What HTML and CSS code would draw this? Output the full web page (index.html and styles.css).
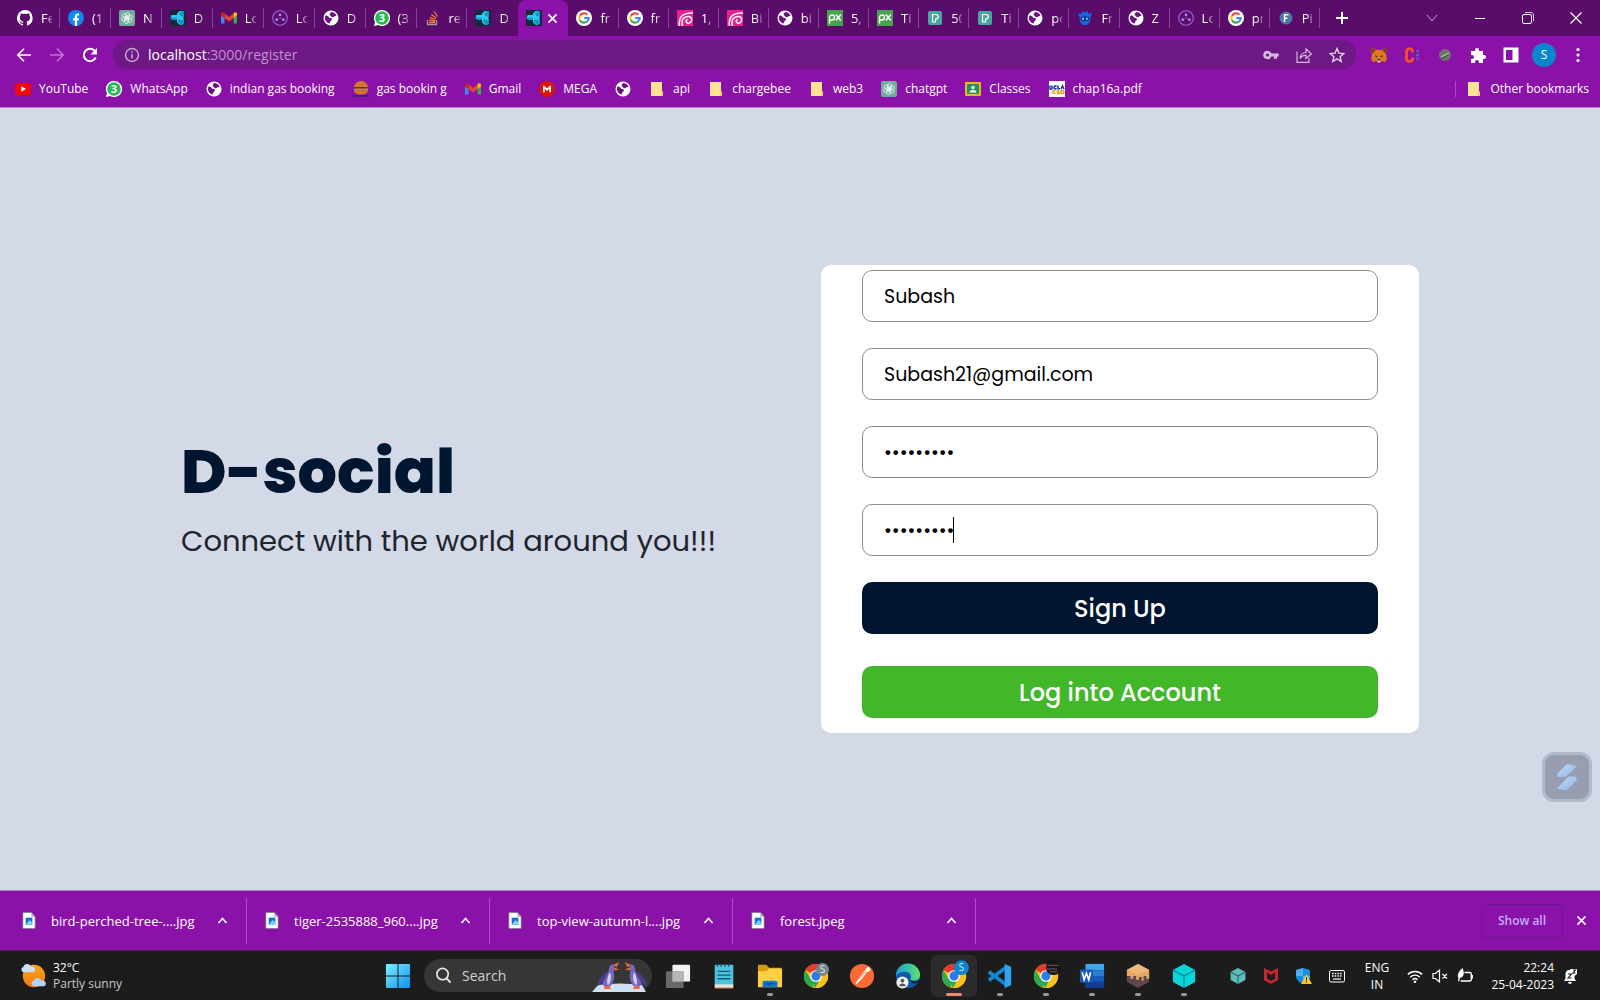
FILE: index.html
```html
<!DOCTYPE html>
<html lang="en">
<head>
<meta charset="utf-8">
<meta name="viewport" content="width=device-width, initial-scale=1">
<title>D-social</title>
<link rel="stylesheet" href="styles.css">
</head>
<body>
<svg class="sprite" aria-hidden="true">
  <defs>
    <linearGradient id="g-win" x1="0" y1="0" x2="1" y2="1"><stop offset="0" stop-color="#7df0ff"/><stop offset="1" stop-color="#0d8ff0"/></linearGradient>
    <linearGradient id="g-edge" x1="0" y1="0" x2="1" y2="0"><stop offset="0" stop-color="#1b9de2"/><stop offset="1" stop-color="#5fe06a"/></linearGradient>
    <linearGradient id="g-sun" x1="0" y1="0" x2="0" y2="1"><stop offset="0" stop-color="#f9a51c"/><stop offset="1" stop-color="#f07a13"/></linearGradient>
    <linearGradient id="g-s" x1="0" y1="0" x2="1" y2="1"><stop offset="0" stop-color="#c3dcf8"/><stop offset="1" stop-color="#8db4e6"/></linearGradient>
  </defs>
  <symbol id="github" viewBox="0 0 16 16"><path fill="#fff" d="M8 0a8 8 0 0 0-2.500 15.600c.4.1.5-.2.5-.4v-1.500c-2.200.5-2.700-1-2.700-1-.4-.9-.9-1.200-.9-1.200-.7-.5.1-.5.1-.5.8.1 1.200.8 1.200.8.7 1.300 1.900.9 2.300.7.1-.5.3-.9.5-1.100-1.800-.2-3.600-.9-3.600-4 0-.9.3-1.600.8-2.100-.1-.2-.4-1 .1-2.100 0 0 .7-.2 2.200.8a7.500 7.500 0 0 1 4 0c1.500-1 2.200-.8 2.200-.8.4 1.100.2 1.900.1 2.100.5.6.8 1.300.8 2.100 0 3.100-1.900 3.700-3.700 3.900.3.3.6.8.6 1.500v2.200c0 .2.100.5.6.4A8 8 0 0 0 8 0z"/></symbol>
  <symbol id="facebook" viewBox="0 0 16 16"><circle cx="8" cy="8" r="8" fill="#1086f0"/><path fill="#fff" d="M6.800 16v-5.500H5V8.200h1.800V6.600c0-2 1.100-3 2.900-3 .6 0 1.300.1 1.300.1v1.900h-.9c-.8 0-1 .5-1 1v1.600h1.900l-.4 2.300H9.100V16z"/></symbol>
  <symbol id="gpt" viewBox="0 0 16 16"><rect width="16" height="16" rx="2" fill="#74aa9c"/><g fill="none" stroke="#e8f5f0" stroke-width=".8"><rect x="6.500" y="2.500" width="4" height="6.500" rx="2"/><rect x="6.500" y="2.500" width="4" height="6.500" rx="2" transform="rotate(60 8 8)"/><rect x="6.500" y="2.500" width="4" height="6.500" rx="2" transform="rotate(120 8 8)"/><rect x="6.500" y="2.500" width="4" height="6.500" rx="2" transform="rotate(180 8 8)"/><rect x="6.500" y="2.500" width="4" height="6.500" rx="2" transform="rotate(240 8 8)"/><rect x="6.500" y="2.500" width="4" height="6.500" rx="2" transform="rotate(300 8 8)"/></g></symbol>
  <symbol id="dapp" viewBox="0 0 16 16"><rect width="16" height="16" fill="#122a3a"/><path fill="#2fc8ee" d="M7 3.500L9.500 1 14 1.500V7l-1 1 1 1.500V14l-4 1-3-2.500V10l-5-.5L.5 8l1-3L7 5z"/><path fill="#1795c9" d="M9 3l5-1.500V7l-4-1zM8 9.500l6 .5v4l-3 .5-3-2.500zM1 7.500l6 .5v2l-5-.5z"/></symbol>
  <symbol id="gmail" viewBox="0 0 16 16"><path fill="#4285f4" d="M0 4v9.500h3.500V7z"/><path fill="#34a853" d="M16 4v9.500h-3.500V7z"/><path fill="#ea4335" d="M3.500 3.500L8 7l4.500-3.500V8L8 11.400 3.500 8z"/><path fill="#c5221f" d="M0 4c0-1.800 2-2.400 3.500-1v5L0 5.500z"/><path fill="#fbbc04" d="M16 4c0-1.800-2-2.400-3.500-1v5L16 5.500z"/></symbol>
  <symbol id="dots" viewBox="0 0 16 16"><circle cx="8" cy="8" r="7.300" fill="none" stroke="#a566dd" stroke-width="1.100"/><g fill="#a98af0"><circle cx="8" cy="4.800" r="1.400"/><circle cx="4.700" cy="9.700" r="1.400"/><circle cx="11.300" cy="9.700" r="1.400"/></g><path stroke="#8f72dc" stroke-width=".6" d="M8 6.500V8l-1.800 1M8 8l1.800 1"/></symbol>
  <symbol id="globe" viewBox="0 0 16 16"><circle cx="8" cy="8" r="7.500" fill="#fff"/><path fill="#6d1084" d="M2.400 5.500c1.500-.3 2.600.4 3.400 1.700.7 1 2 .4 2.800 1.200.7.7.2 2-.7 2.400-.8.4-.7 1.600-1.300 2.700-2.800-.7-4.900-3.200-4.600-6.300zM8.200 2c2.400 0 4.300 1.400 5.300 3.400-.8.9-2 .4-2.700 1.300-.8.9-2.300.8-2.600-.2-.3-1.100-1.600-.8-1.600-2C6.600 3.500 7.500 3 8.200 2z"/></symbol>
  <symbol id="whatsapp" viewBox="0 0 16 16"><path fill="#fff" d="M8 0a8 8 0 1 1-3.800 15L0 16l1-4A8 8 0 0 1 8 0z"/><circle cx="8" cy="8" r="6.800" fill="#25b954"/><text x="8" y="11.800" text-anchor="middle" class="glyph-bold" fill="#fff">3</text></symbol>
  <symbol id="stack" viewBox="0 0 16 16"><path fill="none" stroke="#a99" stroke-width="1.300" d="M2.500 10v4.500h9V10"/><path stroke="#f48024" stroke-width="1.300" d="M4 12.500h6M4.200 10l5.900 1M4.800 7.300l5.600 2.200M6.300 4.500l4.900 3.600M9 1.500l3.500 5"/></symbol>
  <symbol id="google" viewBox="0 0 16 16"><circle cx="8" cy="8" r="8" fill="#fff"/><g fill="none" stroke-width="2.200"><path stroke="#ea4335" d="M3.900 5.700A4.700 4.700 0 0 1 11.400 4.700"/><path stroke="#fbbc05" d="M3.900 10.300a4.700 4.700 0 0 1 0-4.600"/><path stroke="#34a853" d="M3.900 10.300a4.700 4.700 0 0 0 7.200 1.200"/><path stroke="#4285f4" d="M11.100 11.500A4.700 4.700 0 0 0 12.700 8H8.200"/></g></symbol>
  <symbol id="swirl" viewBox="0 0 16 16"><rect width="16" height="16" fill="#ee1e8c"/><g fill="none" stroke="#fff" stroke-width="1.500"><path d="M2.500 16C1 8 5 2.500 16 3"/><path d="M5.500 16C3.500 10 7 6 12 6.500c3.500.5 3.500 5.500.5 6.500s-4.500-2.500-2-3.500"/></g></symbol>
  <symbol id="px" viewBox="0 0 16 16"><rect width="16" height="16" fill="#48a44c"/><g fill="none" stroke="#fff" stroke-width="1.500"><path d="M2.500 13.500V7a2.500 2.500 0 1 1 2.500 3H3M8.800 4.500l5 6M13.800 4.500l-5 6"/></g></symbol>
  <symbol id="pexels" viewBox="0 0 16 16"><rect x="1" y="1" width="14" height="14" rx="2" fill="#4aa69b"/><path fill="none" stroke="#fff" stroke-width="1.200" d="M5.500 4.500H9a2 2 0 0 1 0 4.500h-.5v3h-3z"/></symbol>
  <symbol id="freebie" viewBox="0 0 16 16"><path fill="#1769e0" d="M1 3l3 1 2-3 2 2 2-2 2 3 3-1-1.500 4-.5 5-3 3H6l-3-3-.5-5z"/><rect x="3.500" y="6.500" width="9" height="4.500" rx="2.200" fill="#0c2f80"/><circle cx="6" cy="8.700" r="1.200" fill="#6db3ff"/><circle cx="10" cy="8.700" r="1.200" fill="#6db3ff"/></symbol>
  <symbol id="fcircle" viewBox="0 0 16 16"><circle cx="8" cy="8" r="6.500" fill="#4a78a8"/><path fill="none" stroke="#fff" stroke-width="1.400" d="M6.500 12V4.800h4M6.500 8.200h3"/></symbol>
  <symbol id="youtube" viewBox="0 0 16 16"><rect y="2" width="16" height="12" rx="3" fill="#f60606"/><path fill="#fff" d="M6.300 5.300L11 8l-4.700 2.700z"/></symbol>
  <symbol id="burger" viewBox="0 0 16 16"><path fill="#d9752a" d="M1 6.500C1 3 4 0 8 0s7 3 7 6.500zM1 9.500h14c-.5 3-3 4-7 4s-6.500-1-7-4z"/><path fill="#5a3a2a" d="M1 6h14v1.500H1z"/><path fill="#c58a3a" d="M1 7.500h14v2H1z"/><path fill="#4b1d7a" d="M0 14h16v2H0z"/></symbol>
  <symbol id="mega" viewBox="0 0 16 16"><circle cx="8" cy="8" r="8" fill="#dd1405"/><path fill="#fff" d="M4 11.300V4.800h1.300L8 7.600l2.700-2.800H12v6.500h-1.700V7.800L8 10.100 5.700 7.800v3.500z"/></symbol>
  <symbol id="folder" viewBox="0 0 16 16"><path fill="#ffe394" d="M2 1h11v9l1 1v4H2z"/><path fill="#f7c455" d="M12 10.500h1.600V15H12z"/></symbol>
  <symbol id="classes" viewBox="0 0 16 16"><rect y="1" width="16" height="14" rx="1" fill="#f1b51c"/><rect x="2" y="3" width="12" height="10" fill="#23945a"/><circle cx="8" cy="6.500" r="1.700" fill="#fff"/><path fill="#fff" d="M4.500 11.500c0-3.300 7-3.300 7 0z"/></symbol>
  <symbol id="ucla" viewBox="0 0 16 16"><rect width="16" height="16" fill="#fff"/><path fill="none" stroke="#143a9c" stroke-width="1.500" d="M1 4.500v3c0 1 2 1 2 0v-3M7.500 5.500c-1.500-1.500-2.500 0-2.500 1s1 2 2.500.8M9 4.500v3.300h2M12 8.300l1.500-3.500L15 8.300"/><path fill="none" stroke="#e5a22c" stroke-width="1.500" d="M6.500 9.800c-1.500-1-2.800 0-2.800 1s1.300 2 2.800 1M10 9.500c-3 0-2 1.500-.5 1.500s1.500 2-1.500 1.300M12 9.500v3h1c2.500 0 2.500-3 0-3z"/></symbol>
  <symbol id="close" viewBox="0 0 16 16"><path stroke="currentColor" stroke-width="2" d="M3 3l10 10M13 3L3 13"/></symbol>
  <symbol id="caretup" viewBox="0 0 16 16"><path fill="none" stroke="#fff" stroke-width="2" d="M3 11l5-5.500 5 5.500"/></symbol>
  <symbol id="file" viewBox="0 0 14 18"><path fill="#fff" stroke="#777" stroke-width=".7" d="M.5.5h9l4 4.500v12.500H.5z"/><path fill="#aaa" d="M9.500.5v4.500h4z"/><rect x="3.500" y="6" width="7" height="7.500" fill="#1374c9"/><path fill="#7fd4ff" d="M3.500 13.500l4-5 3 2.500v2.500z"/></symbol>
  <symbol id="chrome" viewBox="0 0 28 28"><circle cx="14" cy="14" r="13" fill="#fbc116"/><path fill="#e33b2e" d="M14 14L2.700 7.500A13 13 0 0 1 25.300 7.500H14z"/><path fill="#2da94f" d="M14 14l-3.500 12.500A13 13 0 0 1 2.700 7.500L8 17z"/><path fill="#2da94f" d="M8.400 17.200l4.600 9.800 4-7-3-.5z"/><path fill="#fbc116" d="M19.600 10.500h7A13 13 0 0 1 13 27l6.500-9.500z"/><circle cx="14" cy="14" r="6.300" fill="#fff"/><circle cx="14" cy="14" r="5" fill="#2f79e8"/></symbol>
  <symbol id="cube" viewBox="0 0 28 28"><path fill="#08d5d8" d="M14 1l12 6.500v13L14 27 2 20.500v-13z"/><path fill="none" stroke="#067f8c" stroke-width="1.200" d="M2 7.500L14 14l12-6.500M14 14v13"/></symbol>
  <symbol id="cube-dim" viewBox="0 0 28 28"><path fill="#5fbdb9" d="M14 0l13 7v14l-13 7-13-7V7z"/><path fill="none" stroke="#27696c" stroke-width="2" d="M1 7l13 7 13-7M14 14v14"/></symbol>
  <symbol id="penguin" viewBox="0 0 26 30"><path fill="#7967bd" d="M19 3c-3-1-6 1-6 4 0 3-5 8-7 17 2 3 7 4 10 0 3-5 3-9 2-14z"/><path fill="#d7d0f0" d="M14 11c2 4 1 11-2 14-2-3-1-9 2-14z"/><path fill="#4d3d91" d="M13 9C7 12 2 18 0 26c5-2 10-8 13-17z"/><path fill="#f06a32" d="M18 3l6-3-3 6zM18 6l6 2-5 1zM8 26h6l1 3H8z"/></symbol>
</svg>

<header class="browser">
  <div class="tabstrip">
    <div class="tabs">
      <a class="tab" href="#"><svg class="ico"><use href="#github"/></svg><span class="tab-text">Fe</span></a>
      <a class="tab" href="#"><svg class="ico"><use href="#facebook"/></svg><span class="tab-text">(1</span></a>
      <a class="tab" href="#"><svg class="ico"><use href="#gpt"/></svg><span class="tab-text">N</span></a>
      <a class="tab" href="#"><svg class="ico"><use href="#dapp"/></svg><span class="tab-text">D</span></a>
      <a class="tab" href="#"><svg class="ico"><use href="#gmail"/></svg><span class="tab-text">Lo</span></a>
      <a class="tab" href="#"><svg class="ico"><use href="#dots"/></svg><span class="tab-text">Lo</span></a>
      <a class="tab" href="#"><svg class="ico"><use href="#globe"/></svg><span class="tab-text">D</span></a>
      <a class="tab" href="#"><svg class="ico"><use href="#whatsapp"/></svg><span class="tab-text">(3</span></a>
      <a class="tab" href="#"><svg class="ico"><use href="#stack"/></svg><span class="tab-text">re</span></a>
      <a class="tab before-active" href="#"><svg class="ico"><use href="#dapp"/></svg><span class="tab-text">D</span></a>
      <div class="tab active"><svg class="ico"><use href="#dapp"/></svg><button class="icon-btn tab-close" aria-label="Close tab"><svg class="ico-s"><use href="#close"/></svg></button></div>
      <a class="tab" href="#"><svg class="ico"><use href="#google"/></svg><span class="tab-text">fr</span></a>
      <a class="tab" href="#"><svg class="ico"><use href="#google"/></svg><span class="tab-text">fr</span></a>
      <a class="tab" href="#"><svg class="ico"><use href="#swirl"/></svg><span class="tab-text">1,</span></a>
      <a class="tab" href="#"><svg class="ico"><use href="#swirl"/></svg><span class="tab-text">Bi</span></a>
      <a class="tab" href="#"><svg class="ico"><use href="#globe"/></svg><span class="tab-text">bi</span></a>
      <a class="tab" href="#"><svg class="ico"><use href="#px"/></svg><span class="tab-text">5,</span></a>
      <a class="tab" href="#"><svg class="ico"><use href="#px"/></svg><span class="tab-text">Ti</span></a>
      <a class="tab" href="#"><svg class="ico"><use href="#pexels"/></svg><span class="tab-text">50</span></a>
      <a class="tab" href="#"><svg class="ico"><use href="#pexels"/></svg><span class="tab-text">Ti</span></a>
      <a class="tab" href="#"><svg class="ico"><use href="#globe"/></svg><span class="tab-text">po</span></a>
      <a class="tab" href="#"><svg class="ico"><use href="#freebie"/></svg><span class="tab-text">Fr</span></a>
      <a class="tab" href="#"><svg class="ico"><use href="#globe"/></svg><span class="tab-text">Z</span></a>
      <a class="tab" href="#"><svg class="ico"><use href="#dots"/></svg><span class="tab-text">Lo</span></a>
      <a class="tab" href="#"><svg class="ico"><use href="#google"/></svg><span class="tab-text">pr</span></a>
      <a class="tab" href="#"><svg class="ico"><use href="#fcircle"/></svg><span class="tab-text">Pi</span></a>
    </div>
    <button class="icon-btn new-tab" aria-label="New tab"><svg class="ico" viewBox="0 0 16 16"><path stroke="#fff" stroke-width="2" d="M8 2v12M2 8h12"/></svg></button>
    <div class="window-controls">
      <button class="icon-btn" aria-label="Search tabs"><svg class="ico" viewBox="0 0 16 16"><path fill="none" stroke="#c9a9d1" d="M3 5l5 6 5-6"/></svg></button>
      <button class="icon-btn" aria-label="Minimize"><svg class="ico" viewBox="0 0 16 16"><path stroke="#fff" d="M3 8.500h10"/></svg></button>
      <button class="icon-btn" aria-label="Restore"><svg class="ico" viewBox="0 0 16 16"><rect x="2.500" y="4.500" width="9" height="9" rx="1.500" fill="none" stroke="#fff"/><path fill="none" stroke="#d9c3df" d="M5 2.500h6a2.500 2.500 0 0 1 2.500 2.500v6"/></svg></button>
      <button class="icon-btn" aria-label="Close"><svg class="ico" viewBox="0 0 16 16"><path stroke="#fff" stroke-width="1.200" d="M2.500 2.500l11 11M13.500 2.500l-11 11"/></svg></button>
    </div>
  </div>

  <div class="toolbar">
    <div class="nav">
      <button class="icon-btn" aria-label="Back"><svg class="ico" viewBox="0 0 16 16"><path fill="none" stroke="#fff" stroke-width="1.600" d="M15 8H2M8 1.800L1.800 8 8 14.200"/></svg></button>
      <button class="icon-btn" aria-label="Forward"><svg class="ico" viewBox="0 0 16 16"><path fill="none" stroke="#bd74cf" stroke-width="1.600" d="M1 8h13M8 1.800L14.200 8 8 14.200"/></svg></button>
      <button class="icon-btn" aria-label="Reload"><svg class="ico" viewBox="0 0 16 16"><path fill="none" stroke="#fff" stroke-width="2" d="M13.700 10.500A6.200 6.200 0 1 1 12.600 3.800L13.500 5"/><path fill="#fff" d="M15 1v6.500H8.500z"/></svg></button>
    </div>
    <div class="omnibox">
      <svg class="ico" viewBox="0 0 16 16"><circle cx="8" cy="8" r="6.500" fill="none" stroke="#c9a9d1" stroke-width="1.400"/><path stroke="#c9a9d1" stroke-width="1.600" d="M8 7v4.500M8 4.200v1.600"/></svg>
      <a class="url" href="#"><span class="url-host">localhost</span>:3000/register</a>
      <div class="omni-actions">
        <button class="icon-btn" aria-label="Passwords"><svg class="ico" viewBox="0 0 16 16"><path fill="#d5b9dc" fill-rule="evenodd" d="M4.500 3.800a4.200 4.200 0 1 0 3.900 5.600H11v2.400h3V9.400h1.700V6.600H8.400a4.200 4.200 0 0 0-3.900-2.800zm0 2.600a1.600 1.600 0 1 1 0 3.200 1.600 1.600 0 0 1 0-3.200z"/></svg></button>
        <button class="icon-btn" aria-label="Share"><svg class="ico" viewBox="0 0 16 16"><path fill="none" stroke="#d5b9dc" stroke-width="1.200" d="M1 4.500v10.800h12V11M4 11.500c.5-4 2.500-6 6-6V2l5.300 5-5.300 4.500V8.200c-2.600 0-4.400 1-6 3.300z"/></svg></button>
        <button class="icon-btn" aria-label="Bookmark"><svg class="ico" viewBox="0 0 16 16"><path fill="none" stroke="#e3cfe8" stroke-width="1.400" d="M8 1.600l1.900 4.500 4.900.4-3.700 3.200 1.100 4.800L8 11.900l-4.200 2.600 1.100-4.800L1.200 6.500l4.900-.4z"/></svg></button>
      </div>
    </div>
    <div class="extensions">
      <button class="icon-btn" aria-label="Wallet"><svg class="ico" viewBox="0 0 16 16"><path fill="#e2761b" d="M0 0l6 3h4l6-3-1 7 1 5-2 3-4-1-1 2H7l-1-2-4 1-2-3 1-5z"/><path fill="#763e1a" d="M0 0l5 3-4 4zM16 0l-5 3 4 4z"/><path fill="#d7c1b3" d="M6 12h4l-.5 3h-3z"/><path fill="#233447" d="M4 8l3 1.500-2 .8zM12 8L9 9.500l2 .8zM6.500 12h3v1.500h-3z"/></svg></button>
      <button class="icon-btn" aria-label="Contest"><svg class="ico" viewBox="0 0 16 16"><path fill="none" stroke="#f4502e" stroke-width="2.800" d="M8.500 5.500V4c0-3-6-3-6 0v8c0 3 6 3 6 0v-1.500"/><circle cx="13.500" cy="4" r="1.500" fill="#6c53b8"/><circle cx="13.500" cy="8" r="1.500" fill="#2d78d6"/><circle cx="13.500" cy="12" r="1.500" fill="#6c53b8"/></svg></button>
      <button class="icon-btn" aria-label="Disabled extension"><svg class="ico" viewBox="0 0 16 16"><circle cx="8" cy="8" r="6" fill="#6f7370"/><path stroke="#b3b7ad" stroke-width="1.300" d="M4 10l8-4"/><path stroke="#414441" d="M4.500 12L12 7.500"/></svg></button>
      <button class="icon-btn" aria-label="Extensions"><svg class="ico" viewBox="0 0 16 16"><path fill="#fff" d="M1 4h4V3a2 2 0 0 1 4 0v1h4v4h1a2 2 0 0 1 0 4h-1v4H9v-1a2 2 0 0 0-4 0v1H1v-4h1a2 2 0 0 0 0-4H1z"/></svg></button>
      <button class="icon-btn" aria-label="Side panel"><svg class="ico" viewBox="0 0 16 16"><path fill="#fff" fill-rule="evenodd" d="M.5.5h15v15H.5zM3 3v10h6.500V3z"/></svg></button>
      <button class="icon-btn avatar" aria-label="Profile">S</button>
      <button class="icon-btn" aria-label="Menu"><svg class="ico" viewBox="0 0 16 16"><g fill="#fff"><circle cx="8" cy="2.500" r="1.600"/><circle cx="8" cy="8" r="1.600"/><circle cx="8" cy="13.500" r="1.600"/></g></svg></button>
    </div>
  </div>

  <nav class="bookmarks">
    <a class="bookmark" href="#"><svg class="ico"><use href="#youtube"/></svg>YouTube</a>
    <a class="bookmark" href="#"><svg class="ico"><use href="#whatsapp"/></svg>WhatsApp</a>
    <a class="bookmark" href="#"><svg class="ico"><use href="#globe"/></svg>indian gas booking</a>
    <a class="bookmark" href="#"><svg class="ico"><use href="#burger"/></svg>gas bookin g</a>
    <a class="bookmark" href="#"><svg class="ico"><use href="#gmail"/></svg>Gmail</a>
    <a class="bookmark" href="#"><svg class="ico"><use href="#mega"/></svg>MEGA</a>
    <a class="bookmark" href="#" aria-label="Site"><svg class="ico"><use href="#globe"/></svg></a>
    <a class="bookmark" href="#"><svg class="ico"><use href="#folder"/></svg>api</a>
    <a class="bookmark" href="#"><svg class="ico"><use href="#folder"/></svg>chargebee</a>
    <a class="bookmark" href="#"><svg class="ico"><use href="#folder"/></svg>web3</a>
    <a class="bookmark" href="#"><svg class="ico"><use href="#gpt"/></svg>chatgpt</a>
    <a class="bookmark" href="#"><svg class="ico"><use href="#classes"/></svg>Classes</a>
    <a class="bookmark" href="#"><svg class="ico"><use href="#ucla"/></svg>chap16a.pdf</a>
    <a class="bookmark other" href="#"><svg class="ico"><use href="#folder"/></svg>Other bookmarks</a>
  </nav>
</header>

<main class="page">
  <div class="register">
    <section class="intro">
      <h1 class="brand">D-social</h1>
      <p class="tagline">Connect with the world around you!!!</p>
    </section>
    <form class="card">
      <input class="field" type="text" aria-label="Username" value="Subash">
      <input class="field" type="email" aria-label="Email" value="Subash21@gmail.com">
      <input class="field" type="password" aria-label="Password" value="secret123">
      <div class="field-focus">
        <input class="field" type="password" aria-label="Password again" value="secret123">
        <span class="caret"></span>
      </div>
      <button class="btn signup" type="button">Sign Up</button>
      <button class="btn login" type="button">Log into Account</button>
    </form>
  </div>
  <button class="widget" aria-label="Assistant"><svg class="widget-ico" viewBox="0 0 24 30"><path fill="url(#g-s)" d="M2 11L11 2q1.500-1 3-1L23 3 12 14q-1 1-2.500 1H4Q-.5 15 2 11z"/><path fill="url(#g-s)" d="M22 19L13 28q-1.500 1.500-3 1.500L1 27.500l11-11.500q1-1 2.500-1.500H20q4 1 2 4.500z"/></svg></button>
</main>

<section class="downloads">
  <div class="download"><svg class="file"><use href="#file"/></svg><span class="download-name">bird-perched-tree-....jpg</span><button class="icon-btn" aria-label="Options"><svg class="ico-s"><use href="#caretup"/></svg></button></div>
  <div class="download"><svg class="file"><use href="#file"/></svg><span class="download-name">tiger-2535888_960....jpg</span><button class="icon-btn" aria-label="Options"><svg class="ico-s"><use href="#caretup"/></svg></button></div>
  <div class="download"><svg class="file"><use href="#file"/></svg><span class="download-name">top-view-autumn-l....jpg</span><button class="icon-btn" aria-label="Options"><svg class="ico-s"><use href="#caretup"/></svg></button></div>
  <div class="download"><svg class="file"><use href="#file"/></svg><span class="download-name">forest.jpeg</span><button class="icon-btn" aria-label="Options"><svg class="ico-s"><use href="#caretup"/></svg></button></div>
  <button class="show-all">Show all</button>
  <button class="icon-btn bar-close" aria-label="Close downloads"><svg class="ico-s"><use href="#close"/></svg></button>
</section>

<footer class="taskbar">
  <div class="weather">
    <svg class="app-ico" viewBox="0 0 28 28"><circle cx="15" cy="14" r="12" fill="url(#g-sun)"/><path fill="#cfe0fa" d="M4 10a3 3 0 0 1-.5-5.800A4.500 4.500 0 0 1 12 4a3 3 0 0 1 2 6z"/><path fill="#b9d0f5" d="M15 25a3 3 0 0 1-.5-5.800 4.500 4.500 0 0 1 8.500 0 3 3 0 0 1 3 5.800z"/></svg>
    <div><div class="temp">32°C</div><div class="sky">Partly sunny</div></div>
  </div>
  <div class="apps">
    <button class="icon-btn start" aria-label="Start"><svg class="app-ico" viewBox="0 0 28 28"><g fill="url(#g-win)"><path d="M1 2.500Q1 1 2.500 1h11v12.500H1zM14.500 1h11Q27 1 27 2.500v11H14.500zM1 14.500h12.500V27h-11Q1 27 1 25.500zM14.500 14.500H27v11q0 1.500-1.500 1.500h-11z"/></g></svg></button>
    <label class="search">
      <svg class="search-ico" viewBox="0 0 18 18"><circle cx="8" cy="7.500" r="6" fill="none" stroke="#e6e6e6" stroke-width="1.800"/><path stroke="#e6e6e6" stroke-width="2" d="M12.300 12l4.200 4.500"/></svg>
      <input class="search-input" type="text" aria-label="Search" placeholder="Search">
      <svg class="penguins" viewBox="0 0 56 32"><path fill="#cfe0f0" d="M6 25q22-3 44 0l4 7H0z"/><use href="#penguin" x="4" y="2" width="26" height="28"/><g transform="matrix(-1 0 0 1 58 0)"><use href="#penguin" x="2" y="2" width="26" height="28"/></g></svg>
    </label>
    <button class="app" aria-label="Task view"><svg class="app-ico" viewBox="0 0 28 28"><rect x="8" y="2" width="19" height="18" rx="1" fill="#f3f3f3"/><rect x="1" y="9" width="19" height="18" rx="1" fill="#777" fill-opacity=".85"/><rect x="8" y="9" width="12" height="11" fill="#b7b7b7"/></svg></button>
    <button class="app" aria-label="Notepad"><svg class="app-ico" viewBox="0 0 28 28"><rect x="4" y="2" width="20" height="23" rx="1" fill="#4fc3e0"/><rect x="4" y="23" width="20" height="4" fill="#e9e4dd"/><path stroke="#9a5024" stroke-width="1.200" d="M4 27.200h20"/><path stroke="#17586c" stroke-width="1.500" d="M7 9h14M7 13h14M7 17h14M7 1v3M11 1v3M15 1v3M19 1v3"/></svg></button>
    <button class="app running" aria-label="Files"><svg class="app-ico" viewBox="0 0 28 28"><path fill="#d99a12" d="M1 3q0-1 1-1h8l3 3h13v6H1z"/><path fill="#fccf45" d="M1 9h9l3-3h14v20H1z"/><path fill="#1379cf" d="M6 26v-5q0-2 2-2h12q2 0 2 2v5z"/><path stroke="#0c4f90" stroke-width="2" d="M9 22.500h10"/></svg></button>
    <button class="app" aria-label="Chrome"><svg class="app-ico" viewBox="0 0 28 28"><use href="#chrome"/><circle cx="21" cy="7" r="7" fill="#76868f"/><text x="21" y="11" text-anchor="middle" class="badge-text">S</text></svg></button>
    <button class="app" aria-label="Postman"><svg class="app-ico" viewBox="0 0 28 28"><circle cx="14" cy="14" r="13" fill="#fb6a35"/><path fill="#fff" d="M20 4a3 3 0 0 1 2 5l-3 1-5 7-6 6-1-1 4-6 6-8z"/><path stroke="#fb6a35" d="M11 17l7-8"/></svg></button>
    <button class="app" aria-label="Edge"><svg class="app-ico" viewBox="0 0 28 28"><circle cx="14" cy="14" r="13" fill="#0f5aa8"/><path fill="url(#g-edge)" d="M1 14a13 13 0 0 1 26-1c0 6-7 7-10 5-1-1 1-2 0-5-2-5-12-5-16 1z"/><path fill="#1c1c1c" d="M17 18c3 3 7 2 10 0-2 4-6 5-9 3z"/><circle cx="8" cy="21" r="6.500" fill="#f2f2f2"/><circle cx="8" cy="19" r="2" fill="#555"/><path fill="#555" d="M4.500 25c0-4 7-4 7 0z"/></svg></button>
    <button class="app running current" aria-label="Chrome, profile S"><svg class="app-ico" viewBox="0 0 28 28"><use href="#chrome"/><circle cx="22" cy="5" r="8" fill="#0c84c9"/><text x="22" y="9" text-anchor="middle" class="badge-text">S</text></svg></button>
    <button class="app running" aria-label="Code"><svg class="app-ico" viewBox="0 0 28 28"><path fill="none" stroke="#1586d0" stroke-width="4" d="M2 9.500l18 13.500M2 18.500L20 5"/><path fill="#2ea3ee" d="M19 1l7 3v20l-7 3z"/></svg></button>
    <button class="app running" aria-label="Chrome, second profile"><svg class="app-ico" viewBox="0 0 28 28"><use href="#chrome"/><circle cx="22" cy="5" r="8" fill="#161616"/><path stroke="#7a6464" d="M16 2.500h12M15 6.500h11M18 9.500h8"/></svg></button>
    <button class="app running" aria-label="Word"><svg class="app-ico" viewBox="0 0 28 28"><rect x="7" y="1" width="20" height="7" fill="#41a5ee"/><rect x="7" y="8" width="20" height="6.500" fill="#2b7cd3"/><rect x="7" y="14" width="20" height="6.500" fill="#185abd"/><rect x="7" y="20" width="20" height="7" fill="#103f91"/><rect x="1" y="7" width="14" height="14" rx="1" fill="#185abd"/><path fill="none" stroke="#fff" stroke-width="1.700" d="M3.500 10l2 8L8 11l2.500 7 2-8"/></svg></button>
    <button class="app running" aria-label="Ganache"><svg class="app-ico" viewBox="0 0 28 28"><path fill="#5e464d" d="M14 1l12 6.500v13L14 27 2 20.500v-13z"/><path fill="#e4a663" d="M14 1l12 6.500V17h-3v-3h-3v5h-2v-4h-3v3h-3v-4H9v3H6v-3H2V7.500z"/><path fill="#f0b878" d="M14 1l12 6.500L14 13 2 7.500z"/></svg></button>
    <button class="app running" aria-label="Cube"><svg class="app-ico"><use href="#cube"/></svg></button>
  </div>
  <div class="tray">
    <button class="icon-btn tray-item" aria-label="Cube"><svg class="ico"><use href="#cube-dim"/></svg></button>
    <button class="icon-btn tray-item" aria-label="Antivirus"><svg class="ico" viewBox="0 0 16 16"><path fill="#c5262b" d="M1 0l7 3.500L15 0v12l-7 4-7-4zM4 4.500v6L8 13l4-2.500v-6L8 7z"/></svg></button>
    <button class="icon-btn tray-item" aria-label="Security"><svg class="ico" viewBox="0 0 16 16"><path fill="#1390e0" d="M7 0l7 2v6c0 4-3 6-7 8-4-2-7-4-7-8V2z"/><path fill="#74c7f7" d="M7 0v8H0V2zM7 8h7c0 4-3 6-7 8z" fill-opacity=".6"/><path fill="#fdc427" d="M10.500 6l5.500 10H5z"/><path stroke="#222" d="M10.500 9v3.500M10.500 13.500v1"/></svg></button>
    <button class="icon-btn tray-item" aria-label="Touch keyboard"><svg class="ico" viewBox="0 0 16 16"><rect x=".5" y="2.500" width="15" height="11.500" rx="1.500" fill="none" stroke="#fff"/><path stroke="#fff" stroke-width="1.300" stroke-dasharray="1.500 1.200" d="M3 5.500h10M3 8h10"/><path stroke="#fff" stroke-width="1.200" d="M4 11h8"/></svg></button>
    <div class="lang"><div>ENG</div><div>IN</div></div>
    <div class="status">
      <svg class="ico" viewBox="0 0 16 16"><g fill="none" stroke="#fff" stroke-width="1.300"><path d="M.8 6.500a10.200 10.200 0 0 1 14.400 0M3.200 9.200a6.800 6.800 0 0 1 9.600 0M5.500 11.700a3.600 3.600 0 0 1 5 0"/></g><circle cx="8" cy="13.700" r="1.300" fill="#fff"/></svg>
      <svg class="ico" viewBox="0 0 16 16"><path fill="none" stroke="#fff" stroke-width="1.200" d="M1 5.500h2.500L7.500 2v12l-4-3.500H1zM10.500 6l4.500 4.500M15 6l-4.500 4.500"/></svg>
      <svg class="ico" viewBox="0 0 16 16"><path fill="none" stroke="#fff" stroke-width="1.400" d="M7.500 4.500h5.300a1.500 1.500 0 0 1 1.500 1.500v5.500a1.500 1.500 0 0 1-1.500 1.500H3.500"/><path fill="#fff" d="M15 7h1v3.500h-1zM5.500 0c2 4 2 9-2.500 10l-1 3.500L1 13l.5-3C-.5 7 2 3 5.500 0z"/></svg>
    </div>
    <div class="clock"><div>22:24</div><div>25-04-2023</div></div>
    <button class="icon-btn" aria-label="Notifications"><svg class="ico" viewBox="0 0 16 16"><path fill="#fff" d="M6.500 2C3.500 2 2.500 4 2.500 6.500v4L1 13h12l-1.500-2.500V8L14 6V1H8zM5 14h4c-.3 2.500-3.700 2.500-4 0z"/><path fill="none" stroke="#1c1c1c" stroke-width="1.100" d="M5 6h3.500L5 10h3.500M10 2h2.500L10 5h2.500"/></svg></button>
  </div>
</footer>
</body>
</html>
```
FILE: styles.css
```css
* { box-sizing: border-box; }

body {
  margin: 0;
  min-height: 100vh;
  display: flex;
  flex-direction: column;
  font-family: "Segoe UI", "Open Sans", "Noto Sans", sans-serif;
  font-size: 12px;
  line-height: 16px;
  color: #fff;
  background: #d3d9e7;
}

a { color: inherit; text-decoration: none; }
button, input { font-family: inherit; }

.sprite { position: absolute; width: 0; height: 0; }
.glyph-bold { font: bold 11px "Open Sans", sans-serif; }
.badge-text { font: 11px "Open Sans", sans-serif; fill: #dfe9f0; }

.ico { width: 16px; height: 16px; flex: none; display: block; }
.ico-s { width: 13px; height: 13px; flex: none; display: block; }
.app-ico { width: 26px; height: 26px; flex: none; display: block; overflow: visible; }

.icon-btn {
  border: 0;
  padding: 0;
  background: none;
  color: #fff;
  display: flex;
  align-items: center;
  justify-content: center;
}

/* Browser header */
.browser { background: #8a12a8; border-bottom: 1px solid #b77fd0; }

.tabstrip {
  display: flex;
  align-items: center;
  height: 36px;
  background: #590c69;
}
.tabs { flex: 0 1 1320px; display: flex; height: 36px; padding-left: 9px; min-width: 0; }
.tab {
  flex: 50 1 0;
  min-width: 0;
  display: flex;
  align-items: center;
  gap: 8px;
  height: 36px;
  padding-left: 8px;
  font-size: 13px;
  background: linear-gradient(#83479a, #83479a) right center / 1px 20px no-repeat;
}
.tab:nth-child(-n+10) { flex-grow: 51; }
.tab-text {
  width: 11px;
  overflow: hidden;
  white-space: nowrap;
  -webkit-mask-image: linear-gradient(90deg, #000 40%, rgba(0, 0, 0, .3));
  mask-image: linear-gradient(90deg, #000 40%, rgba(0, 0, 0, .3));
}
.tab.before-active { background: none; }
.tab.active { background: #8a12a8; border-radius: 8px 8px 0 0; gap: 4px; }
.new-tab { width: 44px; height: 36px; }
.window-controls { margin-left: auto; display: flex; }
.window-controls .icon-btn { width: 48px; height: 32px; }

.toolbar { display: flex; align-items: center; height: 37px; padding-right: 6px; }
.nav { display: flex; padding: 0 7px; }
.nav .icon-btn { width: 33px; height: 32px; }
.omnibox {
  flex: 1;
  display: flex;
  align-items: center;
  gap: 8px;
  height: 29px;
  padding: 0 3px 0 11px;
  border-radius: 15px;
  background: #6d1884;
}
.url { font-size: 14px; line-height: 20px; color: #c193cd; }
.url-host { color: #fff; }
.omni-actions { margin-left: auto; display: flex; }
.omni-actions .icon-btn, .extensions .icon-btn { width: 33px; height: 28px; }
.extensions { display: flex; align-items: center; padding-left: 6px; }
.extensions .avatar {
  width: 24px;
  height: 24px;
  margin: 0 5px;
  border-radius: 50%;
  background: #0a86cf;
  font-size: 12px;
}

.bookmarks {
  display: flex;
  align-items: center;
  gap: 18px;
  height: 34px;
  padding: 0 11px 2px 15px;
  white-space: nowrap;
}
.bookmark { display: flex; align-items: center; gap: 8px; }
.other { margin-left: auto; padding-left: 10px; border-left: 1px solid #a64bbd; }

/* Registration page */
.page {
  flex: 1;
  position: relative;
  display: flex;
  align-items: center;
  justify-content: center;
  padding: 24px;
  color: #20242c;
  font-family: Poppins, Inter, sans-serif;
}
.register {
  width: 100%;
  max-width: 1238px;
  display: grid;
  grid-template-columns: 640fr 598fr;
  align-items: center;
}
.intro { padding-top: 4px; }
.brand { margin: 0; font-size: 62px; line-height: 80px; font-weight: 800; color: #001530; }
.tagline { margin: 0; font-size: 29px; line-height: 58px; }
.card {
  display: flex;
  flex-direction: column;
  gap: 26px;
  padding: 5px 41px 15px;
  border-radius: 10px;
  background: #fff;
}
.field {
  display: block;
  width: 100%;
  height: 52px;
  padding: 0 21px;
  border: 1px solid #8e8e8e;
  border-radius: 10px;
  background: #fff;
  color: #000;
  font-size: 19px;
}
.field-focus { position: relative; }
.caret { position: absolute; left: 91px; top: 13px; width: 1px; height: 26px; background: #000; }
.btn {
  height: 52px;
  border: 0;
  border-radius: 10px;
  color: #fff;
  font-size: 24px;
  font-weight: 500;
}
.signup { background: #001530; }
.login { background: #42b72a; margin-top: 6px; }
.widget {
  position: absolute;
  right: 8px;
  bottom: 88px;
  width: 50px;
  height: 50px;
  padding: 0;
  display: flex;
  align-items: center;
  justify-content: center;
  border: 3px solid #b4b9ca;
  border-radius: 12px;
  background: #989db0;
}
.widget-ico { width: 22px; height: 28px; }

/* Downloads */
.downloads {
  display: flex;
  align-items: center;
  height: 60px;
  padding-left: 4px;
  background: #8a12a8;
  border-top: 1px solid #b77fd0;
}
.download {
  flex: 0 1 243px;
  display: flex;
  align-items: center;
  height: 46px;
  padding: 0 17px 0 18px;
  border-right: 1px solid #a850bd;
  font-size: 13px;
}
.file { width: 14px; height: 17px; flex: none; }
.download-name { flex: 1; padding-left: 15px; white-space: nowrap; }
.show-all {
  margin-left: auto;
  width: 82px;
  height: 34px;
  border: 1px solid #6c198a;
  border-radius: 4px;
  background: none;
  color: #c3aefb;
  font-size: 12px;
  font-weight: 600;
}
.bar-close { width: 37px; height: 34px; }

/* Taskbar */
.taskbar {
  display: grid;
  grid-template-columns: 1fr auto 1fr;
  align-items: center;
  height: 50px;
  background: #1c1c1c;
  border-top: 1px solid #4a2754;
}
.weather { display: flex; align-items: center; gap: 7px; padding-left: 20px; }
.sky { color: #c8c8c8; }
.apps { display: flex; align-items: center; padding-right: 14px; }
.start { width: 40px; height: 42px; margin-right: 6px; }
.search {
  display: flex;
  align-items: center;
  width: 228px;
  height: 33px;
  margin-right: 3px;
  padding: 0 4px 0 11px;
  border-radius: 17px;
  background: #363636;
}
.search-ico { width: 17px; height: 17px; flex: none; }
.search-input {
  flex: 1;
  min-width: 0;
  padding: 0 0 0 10px;
  border: 0;
  background: none;
  color: #fff;
  font-size: 14px;
}
.search-input::placeholder { color: #d0d0d0; opacity: 1; }
.penguins { width: 56px; height: 32px; flex: none; }
.app {
  position: relative;
  width: 46px;
  height: 42px;
  padding: 0;
  border: 0;
  background: none;
  display: flex;
  align-items: center;
  justify-content: center;
}
.current { background: #2b2b2b; border-radius: 5px; }
.running::after {
  content: "";
  position: absolute;
  bottom: 1px;
  width: 6px;
  height: 3px;
  border-radius: 2px;
  background: #9b9b9b;
}
.current::after { width: 16px; background: #ef8a74; }
.tray { display: flex; align-items: center; justify-content: flex-end; padding-right: 21px; }
.tray-item { width: 33px; height: 40px; }
.lang { width: 48px; text-align: center; line-height: 17px; }
.status { display: flex; gap: 9px; padding: 0 6px; }
.clock { width: 84px; padding-right: 9px; text-align: right; line-height: 17px; }
```
